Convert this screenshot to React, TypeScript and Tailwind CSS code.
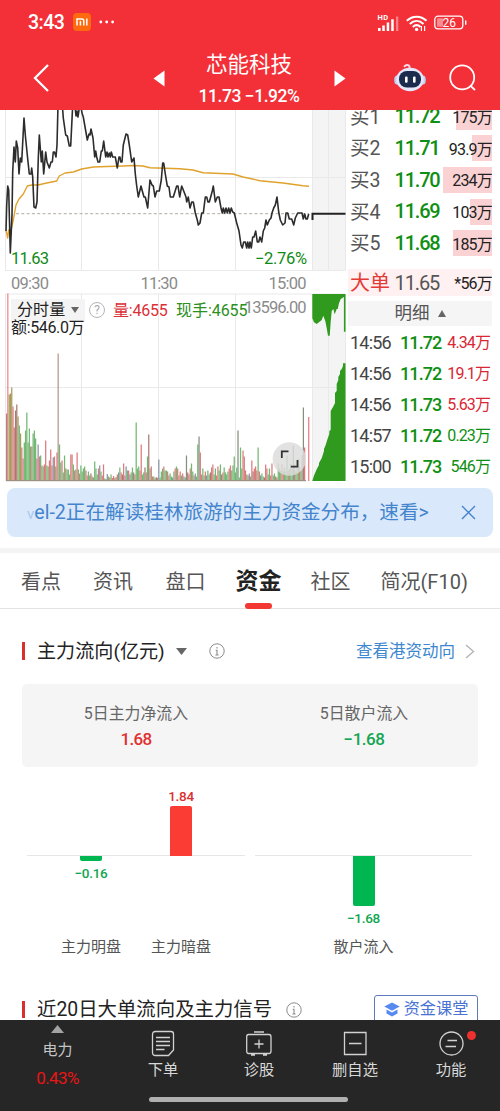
import { Fragment } from 'react';

const BIDS = [
  { label: '买1', price: '11.72', vol: '175万', width: 36 },
  { label: '买2', price: '11.71', vol: '93.9万', width: 20 },
  { label: '买3', price: '11.70', vol: '234万', width: 49 },
  { label: '买4', price: '11.69', vol: '103万', width: 22 },
  { label: '买5', price: '11.68', vol: '185万', width: 39 },
];

const TRADES = [
  { time: '14:56', price: '11.72', vol: '4.34万', up: true },
  { time: '14:56', price: '11.72', vol: '19.1万', up: true },
  { time: '14:56', price: '11.73', vol: '5.63万', up: true },
  { time: '14:57', price: '11.72', vol: '0.23万', up: false },
  { time: '15:00', price: '11.73', vol: '546万', up: false },
];

const PRICE_LINE =
  '6,231 6.7,205 7.7,186 8.7,190 10.3,253 12,215 12.7,172 14,147 15.3,162 16.3,141 17.7,148 19,174 20.3,158 21.7,162 23,137 24,118 25.3,135 27.3,155 29.3,174 31,174 31.7,168 32.7,177 34,207 35.7,208 37,202 38.3,158 39.3,135 41.3,162 42.3,151 43.7,174 45.7,152 47,162 49.3,168 51,162 52.3,162 53.3,152 54.5,152 56,157 57,145 58,105 62.3,105 63.3,118 65.7,135 67.3,136 69.3,146 70.7,146 72.7,105 75.3,109 76,116 77,111 78,117 79.3,108 81,108 82.3,114 83.3,117 87.3,140 89,134 90,135 91,129 93,138 94.7,157 95.7,151 96.7,157 98,162 99.7,162 101.3,151 102.3,151 103.7,141 105.7,157 107,152 108,157 109.3,153 110.3,157 111.3,152 112.7,157 115.3,157 117.3,168 119,157 120,157 120.7,162 122,162 123.3,145 126,134 127.7,135 129.3,145 131.7,162 134,158 135.3,174 136.7,186 138.3,197 141,186 142.3,191 144,197 145.3,197 147.7,208 150,180 152,185 153.3,186 155,197 156.7,191 159.3,191 161.3,180 162.7,163 163.7,163 165.3,174 167.3,186 169,187 170.3,197 173.3,197 176.7,186 178,186 179.7,197 181.7,186 183.7,191 186,197 186.7,202 188.3,197 190,208 191.7,202 193.3,202 195.3,213 197.3,220 198.3,225 200,223 201.7,213 203.3,213 205.3,197 206.7,197 208,202 209.3,202 210.7,197 212.3,191 213.3,186 215.3,202 217.3,197 219,197 221,208 222.3,213 223.3,208 224.7,213 226,208 227.3,213 228.7,208 230,213 231.3,208 232.7,212 234.3,213 236.7,223 239,231 241,245 242.3,248 243.7,242 245.3,242 246.7,248 247.7,242 249,248 250,242 251.3,248 252.7,237 254,237 255.7,231 257.3,242 258.7,242 260,237 261.7,242 263.3,231 264.7,228 266,220 267.3,225 269.3,220 271,218 272,213 273.7,208 275.3,205 277,197 278.7,212 280.3,220 282.7,225 285,223 286,213 287.7,213 289.3,219 291.7,219 293.7,225 295.3,218 297.7,213 302,213 303.3,219 304.7,214 306,219 307.3,219 308.7,214';

const AVG_LINE =
  '6,230 7.7,238 8.7,230 11,230 13.3,220 16,205 19,199 23.3,194 27.3,186 31.7,185 38,185 46.7,183 56.7,181 59.3,176 65,173 73.3,172 81.7,169 93.3,167 107,166.5 123,166 133,165.5 143,166 150,167.7 180,168.7 193,170 203,172.7 233,174 243,177 260,180.7 283,183 303,185.7 309,186.3';

// minute volumes of the opening hour, drawn from x = 6.6
const OPENING = [
  67, 187, 86, 87, 93, 74, 53, 70, 76, 64, 55, 47, 33, 22, 38, 50, 68, 38, 52, 34, 34, 47, 50, 42, 22, 36, 24, 25, 15, 14,
  16, 40, 15, 14, 20, 31, 15, 23, 24, 14, 28, 127, 36, 18, 20, 8, 25, 12, 11, 11, 6, 26, 26, 16, 10, 11, 28, 11, 7, 15,
];
const OPENING_COLORS = 'bxooorrbbogorrggggggrgggrprgrgrrggrrrprgrbggrggrgggrrgrgrgrg';

const SPIKES: Record<number, [number, string]> = {
  70: [19, 'g'], 74: [15, 'p'], 77: [16, 'r'], 93: [17, 'r'], 95: [14, 'p'],
  103: [58, 'g'], 107: [36, 'r'], 112: [24, 'g'], 113: [46, 'b'], 121: [21, 'p'],
  143: [25, 'k'], 147: [17, 'g'], 152: [36, 'g'], 153: [44, 'k'], 154: [28, 'r'],
  164: [16, 'r'], 170: [16, 'g'], 178: [15, 'r'], 180: [15, 'g'], 181: [24, 'g'],
  184: [50, 'k'], 186: [33, 'g'], 188: [30, 'r'], 189: [24, 'r'], 195: [20, 'r'],
  200: [33, 'g'], 206: [16, 'r'], 211: [17, 'r'], 216: [17, 'g'], 223: [25, 'g'],
  228: [35, 'k'], 232: [22, 'g'], 235: [25, 'r'], 236: [73, 'k'], 237: [33, 'r'],
};

const BAR_COLORS: Record<string, string> = {
  r: '#dc7b7d', x: '#e56a74', g: '#72b873', b: '#a77b73', o: '#a69b5c', p: '#8a94a5', k: '#85907f',
};

const BASE = [12, 9, 13, 7, 10, 5, 12, 8, 4, 6, 9, 14, 6, 3, 8, 5, 10];
const BASE_COLORS = 'grggbrggprgrr';

const bars = Array.from({ length: 238 }, (_, i) => {
  if (i < OPENING.length) return { h: OPENING[i], c: OPENING_COLORS[i] };
  if (SPIKES[i]) return { h: SPIKES[i][0], c: SPIKES[i][1] };
  let h = BASE[(i * 5 + (i >> 3)) % BASE.length];
  if (i > 77 && i < 88) h = h * 0.5;
  if (i > 115 && i < 122) h = h * 0.4;
  if (i > 215) h += 4;
  return { h, c: BASE_COLORS[(i * 7 + (i >> 2)) % BASE_COLORS.length] };
});

function Charts() {
  return (
    <svg className="block" width="346" height="372" viewBox="0 110 346 372" fontFamily="Roboto, sans-serif">
      <rect x="312" y="110" width="33.5" height="161" fill="#f4f4f4" />
      <rect x="312" y="294" width="33.5" height="187" fill="#f4f4f4" />
      <g stroke="#e9e9e9" strokeWidth="1">
        {[5.5, 81.5, 158.5, 235.5, 312.5, 328.5, 345.5].map(x => (
          <path key={x} d={`M${x} 110V270.5M${x} 294V481`} />
        ))}
        <path d="M5 177.5H345M5 270.5H345M5 294H345M5 387.5H345" />
      </g>
      <path d="M16 213.7H309" stroke="#b1aaa0" strokeWidth="1" strokeDasharray="3 2.3" />
      <polyline points={AVG_LINE} fill="none" stroke="#e0a22c" strokeWidth="1.4" strokeLinejoin="round" />
      <polyline points={PRICE_LINE} fill="none" stroke="#2c2c2c" strokeWidth="1.6" strokeLinejoin="round" />
      <path d="M312.5 220V213.8H345.5" fill="none" stroke="#222" strokeWidth="2" />

      <g fontSize="16.5" fill="#0f8a16">
        <text x="11" y="263.5" textLength="38">11.63</text>
        <text x="255" y="263.5" textLength="52">−2.76%</text>
      </g>
      <g fontSize="16.5" fill="#8b8b8b">
        <text x="11" y="288.5" textLength="38">09:30</text>
        <text x="140.5" y="288.5" textLength="37.5">11:30</text>
        <text x="268.5" y="288.5" textLength="38">15:00</text>
      </g>
      <text x="244" y="313.3" textLength="62.5" fontSize="16.5" fill="#8b8b8b">13596.00</text>

      {bars.map((bar, i) => (
        <rect key={i} x={6.1 + i * 1.257} y={480.5 - bar.h} width={bar.h > 100 ? 1 : 1.25} height={bar.h} fill={BAR_COLORS[bar.c]} />
      ))}
      <rect x="308.2" y="417" width="1.1" height="64" fill="#e56a74" />
      <path d="M6 480.7H306" stroke="#8f8373" />

      <path
        fill="#2f9a1e"
        d="M312.3 294V318.3L314 322.3L316.7 324L319.3 322L321.7 320L323.3 315.7L325.3 321L326.7 328L328 335.7H329.7L330.7 321.7L331.7 311L333.3 309L334.7 314.3L336.7 309H337.7L339 303.3L340.7 299L343.9 297V331.7H345.5V294Z"
      />
      <path
        fill="#2f9a1e"
        d="M312.3 481L314 475.5L316.7 469.3L319 465V463L321.7 458.3L324 451V449L325.7 445L327.5 439L329.3 434V431L330.7 430V411L333 407L335 403V393L336.7 391V384L338.3 380V377L340 374V371L341.7 369L343 366V363.3H345.5V481Z"
      />

      <circle cx="289.3" cy="459" r="16.7" fill="#dcdcdc" fillOpacity="0.83" />
      <path d="M281.8 458V451.3H288.5M290.8 466.7H297.5V460" fill="none" stroke="#333" strokeWidth="1.8" />
    </svg>
  );
}

function InfoIcon() {
  return (
    <svg width="16" height="16" viewBox="0 0 16 16" fill="none" stroke="#8b8b8b">
      <circle cx="8" cy="8" r="7.2" />
      <path d="M8 4v1.6M6.7 7.2H8V12M6.4 12h3.2" strokeWidth="1.1" />
    </svg>
  );
}

function Header() {
  return (
    <header className="relative z-10 flex h-[110px] shrink-0 flex-col bg-[#f33038] text-white">
      <div className="flex h-11 items-center pr-8 pl-[28px]">
        <span className="w-[45px] pt-px text-[19.5px] leading-none font-medium tracking-[-0.5px]">3:43</span>
        <span className="flex h-[18px] w-[18px] items-center justify-center rounded bg-[#ff6a0e]">
          <svg width="12" height="8" viewBox="0 0 12 8" fill="none" stroke="#fff" strokeWidth="1.5">
            <path d="M1 7.5V1H6Q7.8 1 7.8 3V7.5M4.4 3V7.5M10.8 0.4V7.5" />
          </svg>
        </span>
        <svg className="ml-2" width="16" height="4" viewBox="0 0 16 4" fill="#fff">
          <circle cx="1.8" cy="2" r="1.4" />
          <circle cx="7.7" cy="2" r="1.4" />
          <circle cx="13.6" cy="2" r="1.4" />
        </svg>
        <svg className="ml-auto" width="92" height="20" viewBox="0 0 92 20" fill="#fff">
          <text x="1.5" y="7.5" fontSize="7.5" fontWeight="700" fontFamily="Roboto" textLength="10.5">HD</text>
          <path d="M2 16h2.6v3H2zM6.3 13.6h2.5V19H6.3zM10.7 10.5h2.5V19h-2.5zM15.2 7.2h2.5V19h-2.5z" />
          <path d="M20 4.5h2.3V19H20z" opacity="0.4" />
          <g fill="none" stroke="#fff" strokeWidth="2.1">
            <path d="M30.8 8.8C36.5 3.3 44.8 3.3 50.5 8.8M33.8 12C38 8 43.3 8 47.5 12" />
            <path d="M36.8 15C39.4 12.6 41.9 12.6 44.5 15" />
          </g>
          <circle cx="40.6" cy="17.4" r="1.7" />
          <path d="M45.4 19v-5M48.6 14v5" stroke="#fff" strokeWidth="1.2" />
          <rect x="58.8" y="4.2" width="28" height="12.6" rx="3.4" fill="none" stroke="#fff" strokeWidth="1.3" />
          <rect x="61" y="6.3" width="6" height="8.5" rx="1" opacity="0.45" />
          <path d="M89 8.5h1.4v4.2H89z" />
          <text x="66.5" y="14.8" fontSize="12" fontFamily="Roboto" textLength="13.5">26</text>
        </svg>
      </div>
      <div className="relative flex flex-1 items-center pt-[2px]">
        <svg className="ml-[32px]" width="18" height="30" viewBox="0 0 18 30" fill="none" stroke="#fff" strokeWidth="2.3">
          <path d="M16 2L3 15L16 28" />
        </svg>
        <svg className="ml-[103px]" width="12" height="17" viewBox="0 0 12 17" fill="#fff">
          <path d="M0.5 8.5L11.5 0.5V16.5Z" />
        </svg>
        <div className="ml-[25px] flex w-[118px] flex-col items-center pt-px">
          <h1 className="text-[21.5px] leading-[26px] whitespace-nowrap">芯能科技</h1>
          <p className="mt-[8px] text-[17.5px] leading-[20px] font-medium tracking-[-0.45px] whitespace-nowrap">11.73 −1.92%</p>
        </div>
        <svg className="ml-[26px]" width="12" height="17" viewBox="0 0 12 17" fill="#fff">
          <path d="M11.5 8.5L0.5 0.5V16.5Z" />
        </svg>
        <svg className="ml-[47px]" width="34" height="32" viewBox="0 0 34 32">
          <path d="M11.5 4.2Q15 1.5 16.5 4.5V7" fill="none" stroke="#f6d5e5" strokeWidth="2" strokeLinecap="round" />
          <ellipse cx="4" cy="18" rx="2.8" ry="4.6" fill="#b9d3f7" />
          <ellipse cx="30" cy="18" rx="2.8" ry="4.6" fill="#b9d3f7" />
          <ellipse cx="17" cy="17.5" rx="13.8" ry="11.8" fill="#e6e6fa" />
          <rect x="6" y="9" width="22" height="16.5" rx="7.8" fill="#1c2b4d" />
          <rect x="12" y="14.5" width="2.6" height="6.2" rx="1" fill="#fff" />
          <rect x="20" y="14.5" width="2.6" height="6.2" rx="1" fill="#fff" />
        </svg>
        <svg className="ml-[21px]" width="30" height="30" viewBox="0 0 30 30" fill="none" stroke="#fff" strokeWidth="1.8">
          <circle cx="14.2" cy="14.4" r="12" />
          <path d="M22.5 22.8L27 27" />
        </svg>
      </div>
    </header>
  );
}

function OrderBook() {
  return (
    <aside className="h-[372px] w-[146px] overflow-hidden pl-0.5">
      <div className="-mt-[9.5px]">
        {BIDS.map(row => (
          <div key={row.label} className="relative flex h-[31.7px] items-center">
            <div className="absolute top-[3px] right-0 h-[26px] bg-[#fbd2d3]" style={{ width: row.width }} />
            <span className="relative w-[46.5px] pt-[2px] pl-0.5 text-[19.5px] leading-none text-[#555]">{row.label}</span>
            <span className="relative text-[20px] leading-none font-medium tracking-[-1.2px] text-[#0f8f13]">{row.price}</span>
            <span className="relative ml-auto pt-[3px] text-[16px] leading-none tracking-[-0.8px] text-[#222]">{row.vol}</span>
          </div>
        ))}
      </div>
      <div className="mt-[10.5px] flex h-[27px] items-center bg-[#fff0f1]">
        <span className="w-[46.5px] pt-px pl-0.5 text-[20px] leading-none whitespace-nowrap text-[#e33a35]">大单</span>
        <span className="text-[20px] leading-none tracking-[-1.1px] text-[#555]">11.65</span>
        <span className="ml-auto pt-[3px] text-[16px] leading-none tracking-[-0.8px] text-[#222]">*56万</span>
      </div>
      <div className="mt-[4.5px] flex h-[25px] items-center justify-center gap-2 bg-[#f5f5f5] text-[17.5px] leading-none text-[#555]">
        明细
        <svg width="8" height="7" viewBox="0 0 8 7" fill="#666">
          <path d="M4 0L8 7H0Z" />
        </svg>
      </div>
      <div className="mt-[1.5px]">
        {TRADES.map((row, i) => (
          <div key={i} className="flex h-[31px] items-center leading-none">
            <span className="w-[52px] pl-[2px] text-[18px] tracking-[-0.8px] text-[#444]">{row.time}</span>
            <span className="text-[18px] font-medium tracking-[-0.9px] text-[#0f8f13]">{row.price}</span>
            <span className={`ml-auto pt-px pr-0.5 text-[16px] tracking-[-0.9px] ${row.up ? 'text-[#d92734]' : 'text-[#0f8f13]'}`}>{row.vol}</span>
          </div>
        ))}
      </div>
    </aside>
  );
}

function Market() {
  return (
    <section className="relative flex h-[372px] shrink-0">
      <Charts />
      <OrderBook />
      <div className="absolute top-[188px] left-[11px] leading-none whitespace-nowrap">
        <div className="flex h-6 items-center text-[16px]">
          <span className="flex h-[23px] w-[74px] items-center gap-1.5 bg-[#f4f4f4] pl-1.5 tracking-[0.1px] text-[#222]">
            分时量
            <svg width="8" height="6" viewBox="0 0 8 6" fill="#666">
              <path d="M0 0H8L4 6Z" />
            </svg>
          </span>
          <span className="ml-1 flex h-4 w-4 items-center justify-center rounded-full border border-[#b5b5b5] text-[12px] text-[#aaa]">?</span>
          <span className="ml-[8px] w-[63px] pt-px tracking-[-0.2px] text-[#dc2f36]">量:4655</span>
          <span className="pt-px tracking-[-0.05px] text-[#2b8f20]">现手:4655</span>
        </div>
        <div className="-mt-[3px] text-[16px] leading-[18px] tracking-[-0.35px] text-[#222]">额:546.0万</div>
      </div>
    </section>
  );
}

const TABS = [
  { label: '看点', width: 'w-[72px]' },
  { label: '资讯', width: 'w-[72.5px]' },
  { label: '盘口', width: 'w-[70px]' },
  { label: '资金', width: 'w-[75px]', active: true },
  { label: '社区', width: 'w-[70px]' },
  { label: '简况(F10)', width: 'w-[96px]' },
];

function Tabs() {
  return (
    <nav className="flex h-[56px] shrink-0 items-center border-b border-[#e3e3e3] pl-[21px]">
      {TABS.map(tab => (
        <div key={tab.label} className={`relative flex h-full items-center pt-[2px] whitespace-nowrap ${tab.width}`}>
          {tab.active ? (
            <Fragment>
              <span className="text-[23px] leading-none font-bold text-[#222]">{tab.label}</span>
              <span className="absolute -bottom-px left-[9.5px] h-1.5 w-[27px] rounded-full bg-[#f33834]" />
            </Fragment>
          ) : (
            <span className="text-[20px] leading-none text-[#555]">{tab.label}</span>
          )}
        </div>
      ))}
    </nav>
  );
}

function FlowColumn({ label, value, height, up }: { label: string; value: string; height: number; up?: boolean }) {
  return (
    <div className="flex w-[90px] flex-col items-center text-[13.5px] leading-none font-medium">
      <div className="flex h-[89px] flex-col items-center justify-end">
        {up && (
          <>
            <span className="mb-[3px] tracking-[-0.3px] text-[#d9302f]">{value}</span>
            <div className="w-[22px] rounded-t-[2px] bg-[#fa3c34]" style={{ height }} />
          </>
        )}
      </div>
      <div className="flex h-[82px] flex-col items-center">
        {!up && (
          <>
            <div className="w-[22px] rounded-b-[2px] bg-[#00b651]" style={{ height }} />
            <span className="mt-[6px] tracking-[-0.3px] text-[#12a551]">{value}</span>
          </>
        )}
      </div>
      <span className="text-[15px] leading-[18px] font-normal text-[#555]">{label}</span>
    </div>
  );
}

function FundFlow() {
  return (
    <section className="h-[411px] shrink-0 overflow-hidden">
      <div className="flex h-[75px] items-center pt-[9px] pr-[25px] pl-[22px]">
        <span className="h-[18px] w-[3px] bg-[#d9302f]" />
        <h2 className="ml-3 pt-[2px] text-[19.1px] leading-none whitespace-nowrap text-[#222]">主力流向(亿元)</h2>
        <svg className="ml-[11px]" width="11" height="7" viewBox="0 0 11 7" fill="#666">
          <path d="M0 0H11L5.5 7Z" />
        </svg>
        <span className="ml-[22px]"><InfoIcon /></span>
        <span className="ml-auto pt-[2px] text-[16.5px] leading-none text-[#3d87cf]">查看港资动向</span>
        <svg className="ml-[10px]" width="10" height="15" viewBox="0 0 10 15" fill="none" stroke="#b5b5b5" strokeWidth="1.4">
          <path d="M1 1L8.5 7.5L1 14" />
        </svg>
      </div>
      <div className="mx-[22px] flex h-[83px] rounded-[5px] bg-[#f5f5f5]">
        <div className="flex flex-1 flex-col items-center pt-[21px]">
          <span className="text-[15.9px] leading-[18px] text-[#666]">5日主力净流入</span>
          <span className="mt-[7px] text-[17px] leading-[18px] font-medium tracking-[-0.7px] text-[#e0302f]">1.68</span>
        </div>
        <div className="flex flex-1 flex-col items-center pt-[21px]">
          <span className="text-[15.9px] leading-[18px] text-[#666]">5日散户流入</span>
          <span className="mt-[7px] text-[17px] leading-[18px] font-medium tracking-[-0.5px] text-[#12a551]">−1.68</span>
        </div>
      </div>
      <div className="relative flex h-[207px] gap-[10px] pl-[27px]">
        <div className="relative flex w-[218px] pl-[19px]">
          <div className="absolute top-[88px] left-0 h-px w-full bg-[#e6e6e6]" />
          <div className="relative flex">
            <FlowColumn label="主力明盘" value="−0.16" height={5} />
            <FlowColumn label="主力暗盘" value="1.84" height={50} up />
          </div>
        </div>
        <div className="relative flex w-[217px] justify-center">
          <div className="absolute top-[88px] left-0 h-px w-full bg-[#e6e6e6]" />
          <div className="relative flex">
            <FlowColumn label="散户流入" value="−1.68" height={50} />
          </div>
        </div>
      </div>
      <div className="flex items-start pt-[16px] pl-[22px]">
        <span className="mt-[11px] h-[17px] w-[3px] bg-[#d9302f]" />
        <h2 className="mt-[10px] ml-3 text-[19.4px] leading-[20px] whitespace-nowrap text-[#222]">近20日大单流向及主力信号</h2>
        <span className="mt-[12px] ml-[14px]"><InfoIcon /></span>
        <div className="mt-[5px] mr-[22px] ml-auto flex h-[32px] w-[104px] items-center justify-center gap-1 rounded-[3px] border border-[#5f79bd] pb-1 text-[16.2px] leading-none whitespace-nowrap text-[#4972d5]">
          <svg width="16" height="15" viewBox="0 0 16 15" fill="#568af0">
            <path d="M8 0.5L15.7 4.6L8 8.8L0.3 4.6ZM2.5 7.5L8 10.4L13.5 7.5V11.5L8 14.5L2.5 11.5Z" />
          </svg>
          资金课堂
        </div>
      </div>
    </section>
  );
}

const NAV = [
  {
    label: '下单',
    icon: <path d="M5.5 1.5H21Q23.5 1.5 23.5 4V20L18.5 25.5H5.5Q2.5 25.5 2.5 22.5V4.5Q2.5 1.5 5.5 1.5ZM6 7.5H20M6 11.5H20M6 15.5H20M6 19.5H14.5" />,
  },
  {
    label: '诊股',
    icon: <path d="M2.5 4.5H23Q25 4.5 25 7V21Q25 23.5 23 23.5H2.5Q0.7 23.5 0.7 21V7Q0.7 4.5 2.5 4.5ZM8 2H18M5 25H9M17 25H21M13 9.5V18.5M8.5 14H17.5" />,
  },
  { label: '删自选', icon: <path d="M2.5 2.5H24V24.5H2.5ZM7 13.5H19.5" /> },
  {
    label: '功能',
    dot: true,
    icon: (
      <>
        <circle cx="13.5" cy="13.5" r="11.5" />
        <path d="M9.5 10.5H19M7.5 16.5H18" />
      </>
    ),
  },
];

function BottomNav() {
  return (
    <footer className="relative flex h-[91px] shrink-0 bg-[#262626] leading-none">
      <div className="flex w-[115px] flex-col items-center pt-[5px]">
        <svg width="13" height="8" viewBox="0 0 13 8" fill="#a3a3a3">
          <path d="M6.5 0L13 8H0Z" />
        </svg>
        <span className="mt-[9px] text-[15px] leading-[16px] text-[#c5c5c5]">电力</span>
        <span className="mt-[11px] text-[17px] leading-[18px] tracking-[-0.6px] text-[#ea1515]">0.43%</span>
      </div>
      {NAV.map(item => (
        <div key={item.label} className="relative flex w-24 flex-col items-center pt-[10px]">
          <svg width="26" height="28" viewBox="0 0 26 28" fill="none" stroke="#d2d2d2" strokeWidth="1.3">
            {item.icon}
          </svg>
          {item.dot && <span className="absolute top-[11px] right-[23px] h-[9px] w-[9px] rounded-full bg-[#ee302f]" />}
          <span className="mt-[4px] text-[15.3px] leading-[16px] text-[#d8d8d8]">{item.label}</span>
        </div>
      ))}
      <div className="absolute bottom-[9.5px] left-[149px] h-[5px] w-[199px] rounded-full bg-[#b0b0b0]" />
    </footer>
  );
}

export default function App() {
  return (
    <div className="flex h-[1111px] w-[500px] flex-col overflow-hidden bg-white font-['Roboto','Noto_Sans_CJK_SC',sans-serif]">
      <Header />
      <Market />
      <div className="flex h-[66px] shrink-0 items-start px-[7px] pt-[5.5px]">
        <div className="relative flex h-[49.5px] w-full items-center rounded-lg bg-[#d9e9fb] pr-[17px] pl-5 text-[#4484cc]">
          <span className="pt-px text-[19.6px] leading-none whitespace-nowrap">
            <span className="text-[15px] opacity-30">v</span>el-2正在解读桂林旅游的主力资金分布，速看&gt;
          </span>
          <svg className="ml-auto" width="15" height="15" viewBox="0 0 15 15" fill="none" stroke="currentColor" strokeWidth="1.4">
            <path d="M1 1L14 14M14 1L1 14" />
          </svg>
        </div>
      </div>
      <div className="h-[5px] shrink-0 bg-[#f4f4f4]" />
      <Tabs />
      <FundFlow />
      <BottomNav />
    </div>
  );
}
